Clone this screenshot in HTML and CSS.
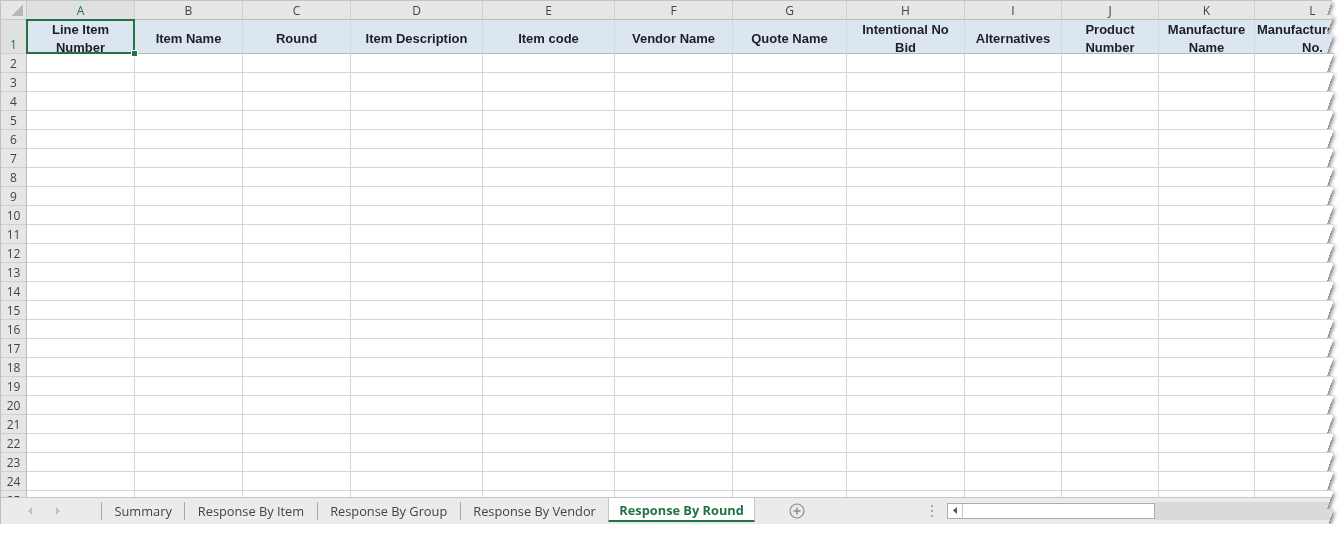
FILE: index.html
```html
<!DOCTYPE html>
<html lang="en">
<head>
    <meta charset="UTF-8" />
    <meta name="viewport" content="width=device-width, initial-scale=1.0" />
    <title>Response By Round</title>
    <link rel="stylesheet" href="styles.css">
</head>
<body>
    <div class="window">
        <div class="sheet">
            <div class="grid" id="grid">
                <div class="corner"></div>
                <div class="col-head active">A</div>
                <div class="col-head">B</div>
                <div class="col-head">C</div>
                <div class="col-head">D</div>
                <div class="col-head">E</div>
                <div class="col-head">F</div>
                <div class="col-head">G</div>
                <div class="col-head">H</div>
                <div class="col-head">I</div>
                <div class="col-head">J</div>
                <div class="col-head">K</div>
                <div class="col-head">L</div>

                <div class="row-head first active">1</div>
                <div class="cell title selected">Line Item<br>Number</div>
                <div class="cell title">Item Name</div>
                <div class="cell title">Round</div>
                <div class="cell title">Item Description</div>
                <div class="cell title">Item code</div>
                <div class="cell title">Vendor Name</div>
                <div class="cell title">Quote Name</div>
                <div class="cell title">Intentional No<br>Bid</div>
                <div class="cell title">Alternatives</div>
                <div class="cell title">Product<br>Number</div>
                <div class="cell title">Manufacture<br>Name</div>
                <div class="cell title nowrap">Manufacturer Part<br>No.</div>
            </div>

            <div class="tabbar">
                <div class="tabs-area">
                    <div class="nav">
                        <svg width="6" height="8" viewBox="0 0 6 8"><polygon points="5,0 5,8 1,4" fill="#c2c2c2"/></svg>
                        <svg width="6" height="8" viewBox="0 0 6 8"><polygon points="1,0 1,8 5,4" fill="#c2c2c2"/></svg>
                    </div>
                    <div class="sep"></div>
                    <div class="tab">Summary</div>
                    <div class="sep"></div>
                    <div class="tab">Response By Item</div>
                    <div class="sep"></div>
                    <div class="tab">Response By Group</div>
                    <div class="sep"></div>
                    <div class="tab">Response By Vendor</div>
                    <div class="tab current">Response By Round</div>
                    <div class="add-sheet">
                        <svg width="16" height="16" viewBox="0 0 16 16">
                            <circle cx="8" cy="8" r="7" fill="none" stroke="#8c8c8c" stroke-width="1.2"/>
                            <path d="M8 4.5v7M4.5 8h7" stroke="#8c8c8c" stroke-width="1.5"/>
                        </svg>
                    </div>
                </div>
                <div class="splitter">
                    <svg width="2" height="12" viewBox="0 0 2 12">
                        <rect x="0" y="0" width="2" height="2" fill="#a9a9a9"/>
                        <rect x="0" y="5" width="2" height="2" fill="#a9a9a9"/>
                        <rect x="0" y="10" width="2" height="2" fill="#a9a9a9"/>
                    </svg>
                </div>
                <div class="hscroll">
                    <div class="thumb">
                        <div class="scroll-btn">
                            <svg width="4" height="7" viewBox="0 0 4 7"><polygon points="4,0 4,7 0,3.5" fill="#555"/></svg>
                        </div>
                    </div>
                    <div class="trough"></div>
                </div>
            </div>
        </div>
    </div>
    <script>
        // empty rows 2..25
        const grid = document.getElementById("grid");
        for (let r = 2; r <= 25; r++) {
            const head = document.createElement("div");
            head.className = "row-head";
            head.textContent = r;
            grid.appendChild(head);
            for (let c = 0; c < 12; c++) {
                const cell = document.createElement("div");
                cell.className = "cell";
                grid.appendChild(cell);
            }
        }
    </script>
</body>
</html>
```

FILE: styles.css
```css
body {
    margin: 0;
    background: #fff;
    font-family: "Liberation Sans", Arial, sans-serif;
}
.window {
    width: 1334px;
    filter: drop-shadow(1px 3px 2px rgba(0, 0, 0, 0.55));
}
.sheet {
    height: 524px;
    display: flex;
    flex-direction: column;
    background: #fff;
    border-left: 1px solid #bfbfbf;
    border-top: 1px solid #c4c4c4;
    box-sizing: border-box;
    -webkit-mask:
        linear-gradient(#000, #000) left top / calc(100% - 7px) 100% no-repeat,
        linear-gradient(to bottom right, #000 50%, transparent 50%) right 0 top 15px / 7px 19px repeat-y;
    mask:
        linear-gradient(#000, #000) left top / calc(100% - 7px) 100% no-repeat,
        linear-gradient(to bottom right, #000 50%, transparent 50%) right 0 top 15px / 7px 19px repeat-y;
}
.grid {
    flex: none;
    height: 496px;
    overflow: hidden;
    display: grid;
    grid-template-columns: 26px 108px 108px 108px 132px 132px 118px 114px 118px 97px 97px 96px 116px;
    grid-template-rows: 19px 34px;
    grid-auto-rows: 19px;
}
.grid > div {
    box-sizing: border-box;
}
.corner {
    background: #e6e6e6 linear-gradient(135deg, transparent 50%, #b7b7b7 50%) no-repeat right 3px bottom 3px / 11px 11px;
    border-right: 1px solid #c6c6c6;
    border-bottom: 1px solid #c6c6c6;
}
.col-head,
.row-head {
    background: #e6e6e6;
    color: #444;
    font-family: "Open Sans", sans-serif;
    font-size: 12px;
    display: flex;
    align-items: center;
    justify-content: center;
}
.col-head {
    border-right: 1px solid #cfcfcf;
    border-bottom: 1px solid #bdbdbd;
}
.row-head {
    border-right: 1px solid #bdbdbd;
    border-bottom: 1px solid #cfcfcf;
}
.row-head.first {
    align-items: flex-end;
}
.col-head.active,
.row-head.active {
    background: #e0e0e0;
    color: #217346;
}
.cell {
    border-right: 1px solid #d6d6d6;
    border-bottom: 1px solid #d6d6d6;
}
.cell.title {
    background: #dce6f1;
    border-right-color: #d3dae3;
    border-bottom: 1px solid #b4b8be;
    color: #1e1e28;
    font-size: 13px;
    font-weight: bold;
    line-height: 18px;
    text-align: center;
    display: flex;
    align-items: center;
    justify-content: center;
    padding: 4px 3px 0;
}
.cell.nowrap {
    white-space: nowrap;
}
.cell.selected {
    position: relative;
}
.cell.selected::after {
    content: "";
    position: absolute;
    left: -1px;
    top: -1px;
    right: -1px;
    bottom: -1px;
    border: 2px solid #217346;
}
.cell.selected::before {
    content: "";
    position: absolute;
    right: -4px;
    bottom: -4px;
    width: 5px;
    height: 5px;
    background: #217346;
    border: 1px solid #fff;
    z-index: 2;
}

/* sheet tabs */
.tabbar {
    flex: 1;
    display: flex;
    background: #ebebeb;
    border-top: 1px solid #c6c6c6;
    font-family: "Open Sans", sans-serif;
    font-size: 12.8px;
    color: #444;
}
.tabs-area {
    width: 924px;
    display: flex;
    align-items: stretch;
}
.nav {
    width: 100px;
    display: flex;
    align-items: center;
    gap: 22px;
    padding-left: 26px;
    box-sizing: border-box;
}
.sep {
    width: 1px;
    height: 18px;
    background: #a9a9a9;
    align-self: center;
}
.tab {
    display: flex;
    align-items: center;
    padding: 0 12.5px;
    white-space: nowrap;
}
.tab.current {
    background: #fff;
    color: #217346;
    font-weight: bold;
    padding: 1px 10px 0;
    border-left: 1px solid #c6c6c6;
    border-right: 1px solid #c6c6c6;
    border-bottom: 2px solid #217346;
    margin-bottom: 2px;
}
.add-sheet {
    width: 84px;
    display: flex;
    align-items: center;
    justify-content: center;
    padding-bottom: 1px;
    box-sizing: border-box;
}
.splitter {
    width: 14px;
    display: flex;
    align-items: center;
    justify-content: center;
}
.hscroll {
    flex: 1;
    display: flex;
    align-items: center;
    margin-left: 8px;
    padding-bottom: 1px;
}
.thumb {
    width: 208px;
    height: 16px;
    background: #fff;
    border: 1px solid #ababab;
    box-sizing: border-box;
    display: flex;
}
.scroll-btn {
    width: 14px;
    border-right: 1px solid #c6c6c6;
    display: flex;
    align-items: center;
    justify-content: center;
}
.trough {
    flex: 1;
    height: 18px;
    background: #dadada;
}
```
